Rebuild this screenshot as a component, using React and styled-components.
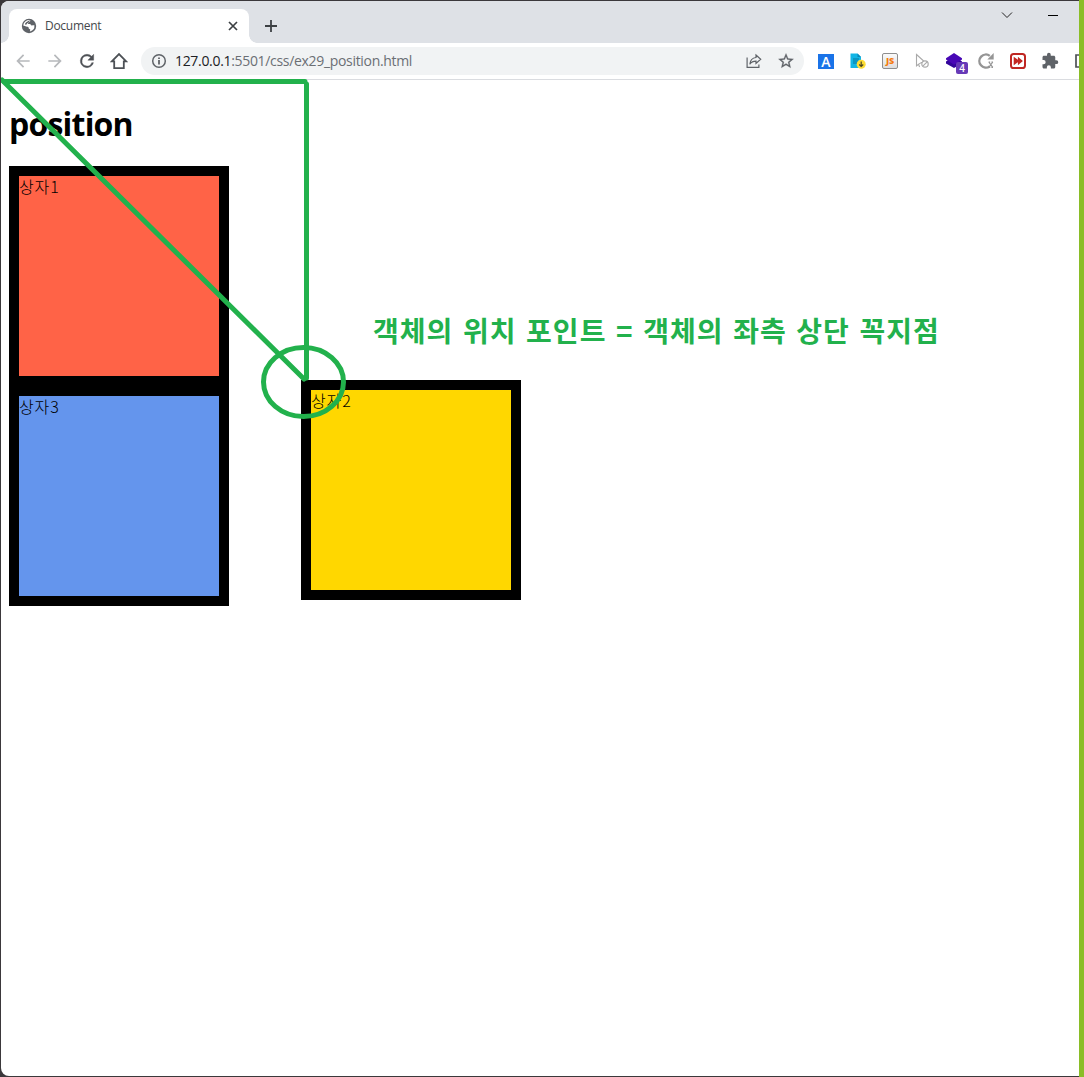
import React from "react";
import styled, { createGlobalStyle } from "styled-components";

const GREEN = "#22b14c";

const GlobalStyle = createGlobalStyle`
  * { box-sizing: border-box; }
  body {
    margin: 0;
    overflow: hidden;
    font-family: "Open Sans", "Noto Sans CJK KR", sans-serif;
  }
`;

const Desktop = styled.div`
  width: 1084px;
  height: 1077px;
  padding: 1px 5px 1px 1px;
  background: linear-gradient(to right, #3b383b 1079px, #8abd27 1079px);
`;

const Window = styled.div`
  height: 1075px;
  display: flex;
  flex-direction: column;
  overflow: hidden;
  background: #fff;
  border-radius: 8px 0 0 8px;
`;

const TabStrip = styled.div`
  height: 42px;
  flex: none;
  display: flex;
  padding: 8px 20px 0 8px;
  background: #dee1e6;
`;

const Tab = styled.div`
  position: relative;
  width: 240px;
  height: 34px;
  display: flex;
  align-items: center;
  padding: 0 8px 0 12px;
  background: #fff;
  border-radius: 8px 8px 0 0;
  &::before, &::after {
    content: "";
    position: absolute;
    bottom: 0;
    width: 8px;
    height: 8px;
  }
  &::before {
    left: -8px;
    background: radial-gradient(circle at 0 0, transparent 7.5px, #fff 8px);
  }
  &::after {
    right: -8px;
    background: radial-gradient(circle at 100% 0, transparent 7.5px, #fff 8px);
  }
`;

const TabTitle = styled.span`
  flex: 1;
  margin-left: 8px;
  font-size: 12px;
  line-height: 16px;
  letter-spacing: -0.28px;
  color: #45484c;
`;

const NewTab = styled.div`
  width: 28px;
  height: 34px;
  margin-left: 8px;
  display: grid;
  place-items: center;
`;

const WindowControls = styled.div`
  margin-left: auto;
  display: flex;
  gap: 34px;
  svg { display: block; }
`;

const Toolbar = styled.div`
  height: 37px;
  flex: none;
  display: flex;
  align-items: center;
  padding-left: 6px;
  overflow: hidden;
  border-bottom: 1px solid #dadce0;
`;

const ToolButton = styled.div`
  width: 32px;
  height: 28px;
  flex: none;
  display: grid;
  place-items: center;
  svg { display: block; }
`;

const AddressBar = styled.div`
  width: 663px;
  height: 28px;
  flex: none;
  display: flex;
  align-items: center;
  margin: 0 6px;
  padding: 0 2px 0 10px;
  border-radius: 14px;
  background: #f1f3f4;
`;

const Url = styled.span`
  flex: 1;
  margin-left: 8px;
  font-size: 14px;
  line-height: 20px;
  letter-spacing: -0.32px;
  color: #6b6f74;
  b { font-weight: 400; color: #202124; }
`;

const Page = styled.main`
  position: relative;
  flex: 1;
  padding: 0 8px;
`;

const Heading = styled.h1`
  margin: 0;
  padding-top: 22px;
  height: 86px;
  font-size: 32px;
  line-height: 43px;
  font-weight: 700;
  letter-spacing: -0.8px;
  color: #000;
`;

const Box = styled.div`
  width: 220px;
  height: 220px;
  border: 10px solid #000;
  background: ${(p) => p.$color};
  font-size: 16px;
  line-height: 21px;
  letter-spacing: 0.9px;
  color: #000;
  font-family: "Noto Sans CJK KR", sans-serif;
  font-weight: 300;
`;

const PlacedBox = styled(Box)`
  position: absolute;
  left: 300px;
  top: 300px;
`;

const Drawing = styled.svg`
  position: absolute;
  left: -1px;
  top: -80px;
  width: 600px;
  height: 600px;
  pointer-events: none;
`;

const Note = styled.p`
  position: absolute;
  left: 372px;
  top: 230px;
  margin: 0;
  font: 700 28px/40px "Noto Sans CJK KR", sans-serif;
  letter-spacing: 1px;
  word-spacing: 2.3px;
  white-space: nowrap;
  color: ${GREEN};
`;

const Icon = ({ size = 20, box = 24, children, color = "#5f6368" }) => (
  <svg width={size} height={size} viewBox={`0 0 ${box} ${box}`} fill={color}>{children}</svg>
);

const Globe = () => (
  <Icon size={16} box={16}>
    <circle cx="8" cy="8" r="7.2" />
    <path fill="#fff" d="M9.2 2.2c.3.8-.1 1.3-.9 1.5-.8.2-.5 1-1.2 1.3-.6.2-.2 1 .5 1H9c.8.1.7 1.2 1.5 1.4.9.2 1.8-.3 2.9-.1A5.7 5.7 0 0 1 9 13.4c-.4-.5.3-1 .3-1.7-.1-.9-1.5-.4-1.6-1.5 0-1-.6-1.4-1.7-1.4L2.2 7.5A6 6 0 0 1 9.2 2.2z" />
    <path d="M5.2 4.2 9 2l-1.2 2.2-1.5 1L5 7 3.8 6z" />
  </Icon>
);

const Back = () => (
  <Icon color="#b7b9bc"><path d="M20 11H7.83l5.59-5.59L12 4l-8 8 8 8 1.41-1.41L7.83 13H20z" /></Icon>
);
const Forward = () => (
  <Icon color="#b7b9bc"><path d="m12 4-1.41 1.41L16.17 11H4v2h12.17l-5.58 5.59L12 20l8-8z" /></Icon>
);
const Reload = () => (
  <Icon color="#4d5156"><path stroke="#4d5156" strokeWidth=".5" d="M17.65 6.35A7.96 7.96 0 0 0 12 4a8 8 0 1 0 7.73 10h-2.08A6 6 0 1 1 12 6c1.66 0 3.14.69 4.22 1.78L13 11h7V4z" /></Icon>
);
const Home = () => (
  <Icon size={18} box={18}><path fill="none" stroke="#4d5156" strokeWidth="1.8" d="M1.8 9.4 9 2l7.2 7.4h-2.4v6.7H4.2V9.4z" /></Icon>
);
const Info = () => (
  <Icon size={16} box={16}>
    <circle cx="8" cy="8" r="6.3" fill="none" stroke="#5f6368" strokeWidth="1.5" />
    <path d="M7.1 7.1h1.8v4.3H7.1zM7.1 4.4h1.8V6H7.1z" />
  </Icon>
);
const Share = () => (
  <Icon size={16} box={16}>
    <path fill="none" stroke="#5f6368" strokeWidth="1.2" d="M1.1 4.5v9.9h11.8v-3M10 2l4.7 4.3L10 10.5V8.1c-2.8 0-4.7.8-6.2 3.1.4-3.9 2.7-6.3 6.2-6.7z" />
  </Icon>
);
const Star = () => (
  <Icon size={18}><path stroke="#5f6368" strokeWidth=".4" d="m22 9.24-7.19-.62L12 2 9.19 8.63 2 9.24l5.46 4.73L5.82 21 12 17.27 18.18 21l-1.63-7.03zM12 15.4l-3.76 2.27 1-4.28-3.32-2.88 4.38-.38L12 6.1l1.71 4.04 4.38.38-3.32 2.88 1 4.28z" /></Icon>
);

const LetterTile = styled.div`
  width: 16px;
  height: 15px;
  background: #1a73e8;
  color: #fff;
  font: 600 14px/15px "Open Sans", sans-serif;
  text-align: center;
`;

const ScriptTile = styled.div`
  width: 16px;
  height: 16px;
  border: 1px solid #8e8e8e;
  border-radius: 2px;
  background: linear-gradient(#fafafa, #dedede);
  color: #f57c10;
  font: 800 9px/14px "Open Sans", sans-serif;
  letter-spacing: -0.2px;
  text-align: center;
`;

const Download = () => (
  <Icon size={18} box={18}>
    <path fill="#12b5e5" d="M1.5 1.5h7l3.5 3.5v11H1.5z" />
    <path fill="#0888b8" d="M8.5 1.5 12 5H8.5z" />
    <path stroke="#08789e" strokeWidth="1.1" d="M4 7h6M4 9h5M4 11h4" />
    <circle cx="12.2" cy="12.2" r="4.5" fill="#fddd35" />
    <path fill="none" stroke="#4c4722" strokeWidth="1.2" d="M12.2 9.5v5m-2-2 2 2 2-2" />
  </Icon>
);
const PointerOff = () => (
  <Icon size={16} box={16}>
    <path fill="#fff" stroke="#aaa" strokeWidth="1.1" d="m2.5 1.5 8.8 8H7.5l-2 1.1-3 2.2z" />
    <path stroke="#aaa" strokeWidth="1.1" d="m4.4 11 1.2 3" />
    <circle cx="11" cy="11" r="3.2" fill="#fff" stroke="#aaa" strokeWidth="1.2" />
    <path stroke="#aaa" strokeWidth="1.1" d="m8.8 13.2 4.4-4.4" />
  </Icon>
);

const BadgeHost = styled.div`
  position: relative;
  width: 16px;
  height: 16px;
`;
const Badge = styled.span`
  position: absolute;
  left: 10px;
  top: 9px;
  width: 12px;
  height: 12px;
  border-radius: 2px;
  background: #673ab7;
  color: #fff;
  font: 600 10px/12px "Open Sans", sans-serif;
  text-align: center;
`;
const Layers = () => (
  <BadgeHost>
    <Icon size={16} box={16}>
      <path fill="#32059a" d="M0 8.4 2.2 7 13.8 7 16 8.4v2L8 15 0 10.4z" />
      <path fill="#4808b5" d="m8 0 8 5.2v1.4L8 11.8 0 6.6V5.2z" />
    </Icon>
    <Badge>4</Badge>
  </BadgeHost>
);
const GrayRefresh = () => (
  <Icon size={18} box={18}>
    <path fill="none" stroke="#959595" strokeWidth="2.4" d="M12.8 3.9A6.5 6.5 0 1 0 12.6 14.4" />
    <path fill="#959595" d="M16.7 1v6.4h-6.4z" />
    <path fill="none" stroke="#959595" strokeWidth="1.2" d="m11.8 10 4 5.4m0-5.4-4 5.4M11.6 10h1.6m1.2 0H16m-4.4 5.4h1.6m1.2 0H16" />
  </Icon>
);
const FastForward = () => (
  <Icon size={16} box={16}>
    <rect x="1" y="1" width="14" height="14" rx="2.6" fill="#fff" stroke="#bf2723" strokeWidth="2" />
    <path fill="#c32722" d="m3.7 3.8 4.2 3V3.8l5 4.2-5 4.2v-3l-4.2 3z" />
  </Icon>
);
const Puzzle = () => (
  <Icon size={18}><path d="M20.5 11H19V7c0-1.1-.9-2-2-2h-4V3.5a2.5 2.5 0 0 0-5 0V5H4c-1.1 0-2 .9-2 2v3.8h1.5a2.7 2.7 0 0 1 0 5.4H2V20c0 1.1.9 2 2 2h3.8v-1.5a2.7 2.7 0 0 1 5.4 0V22H17c1.1 0 2-.9 2-2v-4h1.5a2.5 2.5 0 0 0 0-5z" /></Icon>
);
const SidePanel = () => (
  <Icon size={14} box={14}><path fill="none" stroke="#4d5156" strokeWidth="1.7" d="M1 1h12v12H1z" /></Icon>
);

export default function App() {
  return (
    <>
      <GlobalStyle />
      <Desktop>
        <Window>
          <TabStrip>
            <Tab>
              <Globe />
              <TabTitle>Document</TabTitle>
              <svg width="16" height="16" viewBox="0 0 16 16"><path d="m4 4 8 8m0-8-8 8" stroke="#3c4043" strokeWidth="1.7" /></svg>
            </Tab>
            <NewTab>
              <svg width="14" height="14" viewBox="0 0 14 14"><path d="M7 1v12M1 7h12" stroke="#3c4043" strokeWidth="1.8" /></svg>
            </NewTab>
            <WindowControls>
              <svg width="12" height="12" viewBox="0 0 12 12"><path d="m1 3.5 5 5 5-5" fill="none" stroke="#222" strokeWidth="1" /></svg>
              <svg width="12" height="12" viewBox="0 0 12 12"><path d="M1 6.5h10" stroke="#000" strokeWidth="1" /></svg>
            </WindowControls>
          </TabStrip>
          <Toolbar>
            <ToolButton><Back /></ToolButton>
            <ToolButton><Forward /></ToolButton>
            <ToolButton><Reload /></ToolButton>
            <ToolButton><Home /></ToolButton>
            <AddressBar>
              <Info />
              <Url><b>127.0.0.1</b>:5501/css/ex29_position.html</Url>
              <ToolButton><Share /></ToolButton>
              <ToolButton><Star /></ToolButton>
            </AddressBar>
            <ToolButton><LetterTile>A</LetterTile></ToolButton>
            <ToolButton><Download /></ToolButton>
            <ToolButton><ScriptTile>JS</ScriptTile></ToolButton>
            <ToolButton><PointerOff /></ToolButton>
            <ToolButton><Layers /></ToolButton>
            <ToolButton><GrayRefresh /></ToolButton>
            <ToolButton><FastForward /></ToolButton>
            <ToolButton><Puzzle /></ToolButton>
            <ToolButton><SidePanel /></ToolButton>
          </Toolbar>
          <Page>
            <Heading>position</Heading>
            <Box $color="tomato">상자1</Box>
            <Box $color="cornflowerblue">상자3</Box>
            <PlacedBox $color="gold">상자2</PlacedBox>
            <Note>객체의 위치 포인트 = 객체의 좌측 상단 꼭지점</Note>
            <Drawing viewBox="0 0 600 600" fill="none" stroke={GREEN} strokeWidth="5">
              <path strokeLinecap="round" d="M4 81.5h301M306.5 84v294" />
              <path strokeLinecap="round" d="M2 80 304 379" />
              <ellipse cx="303.5" cy="382" rx="40" ry="34.5" />
            </Drawing>
          </Page>
        </Window>
      </Desktop>
    </>
  );
}
